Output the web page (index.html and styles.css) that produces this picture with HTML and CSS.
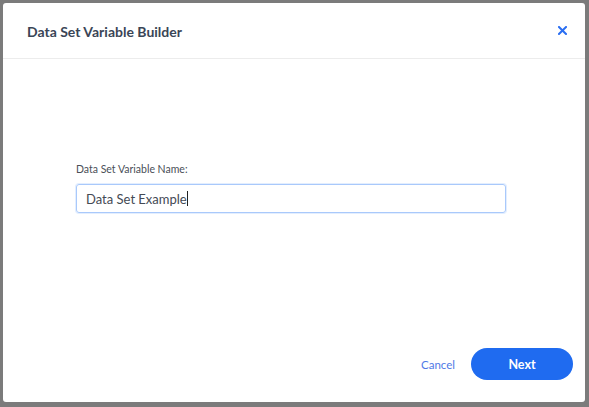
FILE: index.html
```html
<!DOCTYPE html>
<html>
<head>
<meta charset="utf-8">
<link rel="stylesheet" href="styles.css">
</head>
<body>
<div class="overlay">
  <div class="modal">
    <div class="modal-header">
      <h1 class="title">Data Set Variable Builder</h1>
      <button class="close" aria-label="Close">
        <svg width="9" height="9" viewBox="0 0 9 9"><path d="M1 1L8 8M8 1L1 8" stroke="#2a6ef2" stroke-width="2" stroke-linecap="square"/></svg>
      </button>
    </div>
    <div class="modal-body">
      <label class="field-label">Data Set Variable Name:</label>
      <div class="input"><span class="input-text">Data Set Example</span><span class="caret"></span></div>
    </div>
    <div class="modal-footer">
      <button class="btn-cancel">Cancel</button>
      <button class="btn-next">Next</button>
    </div>
  </div>
</div>
</body>
</html>
```
FILE: styles.css
```css
* { box-sizing: border-box; }
html, body { margin: 0; padding: 0; }
body {
  width: 589px;
  height: 407px;
  background: #7b7b7b;
  font-family: "Lato", "Open Sans", sans-serif;
  overflow: hidden;
}
.overlay {
  padding: 3px 4px 5px 3px;
  height: 407px;
}
.modal {
  background: #fff;
  border-radius: 3px;
  height: 399px;
  display: flex;
  flex-direction: column;
}
.modal-header {
  height: 56px;
  border-bottom: 1px solid #ececec;
  display: flex;
  align-items: center;
  justify-content: space-between;
  padding: 2px 18px 0 24px;
}
.title {
  margin: 0;
  font-size: 14px;
  font-weight: 700;
  color: #3a4556;
}
.close {
  border: 0;
  background: none;
  padding: 0;
  width: 9px;
  height: 9px;
  display: flex;
  margin-top: -2px;
}
.modal-body {
  flex: 1;
  padding: 104px 79px 0 73px;
}
.field-label {
  display: block;
  font-size: 10.5px;
  color: #4a4f58;
  margin-bottom: 9px;
}
.input {
  height: 29px;
  border: 1px solid #a9c9fb;
  border-radius: 3px;
  display: flex;
  align-items: center;
  padding-left: 9px;
  box-shadow: 0 0 0 1px #e3eefe;
}
.input-text {
  font-size: 13px;
  color: #444a54;
}
.caret {
  width: 1px;
  height: 15px;
  background: #222;
  margin-left: 0;
}
.modal-footer {
  display: flex;
  justify-content: flex-end;
  align-items: center;
  gap: 16px;
  padding: 0 12px 22px 0;
}
.btn-cancel {
  border: 0;
  background: none;
  font-family: inherit;
  font-size: 11.5px;
  color: #4f79e6;
  padding: 0;
}
.btn-next {
  width: 102px;
  height: 32px;
  border: 0;
  border-radius: 16px;
  background: #1f6bf0;
  color: #fff;
  font-family: inherit;
  font-size: 12.5px;
  font-weight: 700;
}
```
